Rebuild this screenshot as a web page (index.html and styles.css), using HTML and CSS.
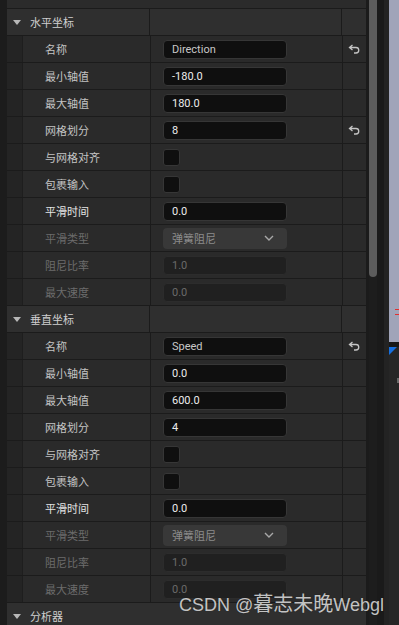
FILE: index.html
```html
<!DOCTYPE html>
<html lang="zh-CN">
  <head>
    <meta charset="UTF-8" />
    <meta name="viewport" content="width=device-width, initial-scale=1.0" />
    <title>混合空间 - 轴设置</title>
    <link rel="stylesheet" href="styles.css">
  </head>
  <body>
    <div class="screen">
      <div class="edge"></div>

      <div class="panel">
        <div class="row row-top"></div>

        <!-- 水平坐标 -->
        <div class="row head">
          <div class="head-name"><span class="caret"></span>水平坐标</div>
          <div class="value"></div>
          <div class="reset"></div>
        </div>
        <div class="row">
          <div class="indent"></div>
          <div class="name">名称</div>
          <div class="value"><div class="field field-dim">Direction</div></div>
          <div class="reset">
            <svg width="12" height="10" viewBox="0 0 12 10"><path d="M4.5 1 L1.5 3.5 L4.5 6 M1.5 3.5 H8 A2.7 2.7 0 0 1 8 9 H6" fill="none" stroke="#c4c4c4" stroke-width="1.3"/></svg>
          </div>
        </div>
        <div class="row">
          <div class="indent"></div>
          <div class="name">最小轴值</div>
          <div class="value"><div class="field">-180.0</div></div>
          <div class="reset"></div>
        </div>
        <div class="row">
          <div class="indent"></div>
          <div class="name">最大轴值</div>
          <div class="value"><div class="field">180.0</div></div>
          <div class="reset"></div>
        </div>
        <div class="row">
          <div class="indent"></div>
          <div class="name">网格划分</div>
          <div class="value"><div class="field">8</div></div>
          <div class="reset">
            <svg width="12" height="10" viewBox="0 0 12 10"><path d="M4.5 1 L1.5 3.5 L4.5 6 M1.5 3.5 H8 A2.7 2.7 0 0 1 8 9 H6" fill="none" stroke="#c4c4c4" stroke-width="1.3"/></svg>
          </div>
        </div>
        <div class="row">
          <div class="indent"></div>
          <div class="name">与网格对齐</div>
          <div class="value"><div class="check"></div></div>
          <div class="reset"></div>
        </div>
        <div class="row">
          <div class="indent"></div>
          <div class="name">包裹输入</div>
          <div class="value"><div class="check"></div></div>
          <div class="reset"></div>
        </div>
        <div class="row">
          <div class="indent"></div>
          <div class="name name-hi">平滑时间</div>
          <div class="value"><div class="field">0.0</div></div>
          <div class="reset"></div>
        </div>
        <div class="row">
          <div class="indent"></div>
          <div class="name name-off">平滑类型</div>
          <div class="value">
            <div class="combo">弹簧阻尼
              <svg width="10" height="6" viewBox="0 0 10 6"><path d="M1 1 L5 5 L9 1" fill="none" stroke="#a8a8a8" stroke-width="1.4"/></svg>
            </div>
          </div>
          <div class="reset"></div>
        </div>
        <div class="row">
          <div class="indent"></div>
          <div class="name name-off">阻尼比率</div>
          <div class="value"><div class="field field-off">1.0</div></div>
          <div class="reset"></div>
        </div>
        <div class="row">
          <div class="indent"></div>
          <div class="name name-off">最大速度</div>
          <div class="value"><div class="field field-off">0.0</div></div>
          <div class="reset"></div>
        </div>

        <!-- 垂直坐标 -->
        <div class="row head">
          <div class="head-name"><span class="caret"></span>垂直坐标</div>
          <div class="value"></div>
          <div class="reset"></div>
        </div>
        <div class="row">
          <div class="indent"></div>
          <div class="name">名称</div>
          <div class="value"><div class="field field-dim">Speed</div></div>
          <div class="reset">
            <svg width="12" height="10" viewBox="0 0 12 10"><path d="M4.5 1 L1.5 3.5 L4.5 6 M1.5 3.5 H8 A2.7 2.7 0 0 1 8 9 H6" fill="none" stroke="#c4c4c4" stroke-width="1.3"/></svg>
          </div>
        </div>
        <div class="row">
          <div class="indent"></div>
          <div class="name">最小轴值</div>
          <div class="value"><div class="field">0.0</div></div>
          <div class="reset"></div>
        </div>
        <div class="row">
          <div class="indent"></div>
          <div class="name">最大轴值</div>
          <div class="value"><div class="field">600.0</div></div>
          <div class="reset"></div>
        </div>
        <div class="row">
          <div class="indent"></div>
          <div class="name">网格划分</div>
          <div class="value"><div class="field">4</div></div>
          <div class="reset"></div>
        </div>
        <div class="row">
          <div class="indent"></div>
          <div class="name">与网格对齐</div>
          <div class="value"><div class="check"></div></div>
          <div class="reset"></div>
        </div>
        <div class="row">
          <div class="indent"></div>
          <div class="name">包裹输入</div>
          <div class="value"><div class="check"></div></div>
          <div class="reset"></div>
        </div>
        <div class="row">
          <div class="indent"></div>
          <div class="name name-hi">平滑时间</div>
          <div class="value"><div class="field">0.0</div></div>
          <div class="reset"></div>
        </div>
        <div class="row">
          <div class="indent"></div>
          <div class="name name-off">平滑类型</div>
          <div class="value">
            <div class="combo">弹簧阻尼
              <svg width="10" height="6" viewBox="0 0 10 6"><path d="M1 1 L5 5 L9 1" fill="none" stroke="#a8a8a8" stroke-width="1.4"/></svg>
            </div>
          </div>
          <div class="reset"></div>
        </div>
        <div class="row">
          <div class="indent"></div>
          <div class="name name-off">阻尼比率</div>
          <div class="value"><div class="field field-off">1.0</div></div>
          <div class="reset"></div>
        </div>
        <div class="row">
          <div class="indent"></div>
          <div class="name name-off">最大速度</div>
          <div class="value"><div class="field field-off">0.0</div></div>
          <div class="reset"></div>
        </div>

        <!-- 分析器 -->
        <div class="row category">
          <div class="head-name"><span class="caret"></span>分析器</div>
        </div>
      </div>

      <div class="gap-a"></div>
      <div class="scroll"><div class="thumb"></div></div>
      <div class="gap-b"></div>
      <div class="gap-c"></div>
      <div class="viewport">
        <div class="view-top"><span class="marker"></span></div>
        <div class="corner"></div>
        <span class="view-dot"></span>
      </div>
    </div>

    <div class="watermark">CSDN @<span class="wm-cjk">暮志未晚</span>Webgl</div>
  </body>
</html>
```

FILE: styles.css
```css
body {
  margin: 0;
  width: 399px;
  height: 625px;
  overflow: hidden;
  background: #1c1c1c;
  font-family: "Noto Sans CJK SC", "Noto Sans", sans-serif;
  font-size: 11px;
  position: relative;
}
.screen {
  display: flex;
  height: 625px;
}
.edge {
  width: 7px;
  background: #1c1c1c;
}
.panel {
  width: 359px;
  background: #282828;
  display: flex;
  flex-direction: column;
  overflow: hidden;
}
.row {
  display: flex;
  flex: none;
  height: 26px;
  border-bottom: 1px solid #1b1b1b;
  background: #2a2a2a;
  color: #c4c4c4;
}
.row-top {
  height: 8px;
  background: #2b2b2b;
}
.head,
.category {
  background: #2f2f2f;
  color: #cfcfcf;
}
.head-name {
  width: 143px;
  border-right: 1px solid #1b1b1b;
  display: flex;
  align-items: center;
  padding-left: 6px;
  box-sizing: border-box;
  line-height: 1;
}
.category .head-name {
  border-right: none;
}
.caret {
  width: 0;
  height: 0;
  border-left: 4px solid transparent;
  border-right: 4px solid transparent;
  border-top: 5px solid #b8b8b8;
  margin-right: 9px;
}
.indent {
  width: 15px;
  background: #242424;
  border-right: 1px solid #1e1e1e;
}
.name {
  width: 127px;
  border-right: 1px solid #1b1b1b;
  display: flex;
  align-items: center;
  padding-left: 22px;
  box-sizing: content-box;
  width: 105px;
}
.name-hi {
  color: #e4e4e4;
}
.name-off {
  color: #6c6c6c;
}
.value {
  width: 192px;
  border-right: 1px solid #1b1b1b;
  display: flex;
  align-items: center;
  padding-left: 12px;
  box-sizing: border-box;
}
.reset {
  width: 22px;
  display: flex;
  align-items: center;
  justify-content: center;
}
.field {
  width: 124px;
  height: 19px;
  box-sizing: border-box;
  background: #0f0f0f;
  border: 1px solid #363636;
  border-radius: 4px;
  font-family: Roboto, "Noto Sans CJK SC", sans-serif;
  font-size: 11px;
  color: #ececec;
  padding-left: 8px;
  display: flex;
  align-items: center;
}
.field-dim {
  color: #c8c8c8;
}
.field-off {
  background: #202020;
  border-color: #2c2c2c;
  color: #6a6a6a;
}
.check {
  width: 17px;
  height: 17px;
  box-sizing: border-box;
  background: #0f0f0f;
  border: 1px solid #363636;
  border-radius: 3px;
}
.combo {
  width: 124px;
  height: 21px;
  box-sizing: border-box;
  background: #383838;
  border-radius: 4px;
  color: #8c8c8c;
  padding: 0 13px 0 9px;
  display: flex;
  align-items: center;
  justify-content: space-between;
}
.gap-a {
  width: 3px;
  background: #1b1b1b;
}
.scroll {
  width: 8px;
  background: #1d1d1d;
}
.thumb {
  height: 277px;
  background: #5c5c5c;
  border-radius: 0 0 4px 4px;
}
.gap-b {
  width: 7px;
  background: #1a1a1a;
}
.gap-c {
  width: 5px;
  background: #232323;
}
.viewport {
  width: 10px;
  background: #262626;
  position: relative;
}
.view-top {
  height: 342px;
  background: #a0a4b9;
  position: relative;
  border-bottom: 5px solid #181818;
}
.marker {
  position: absolute;
  left: 6px;
  top: 309px;
  width: 4px;
  height: 4px;
  border-top: 1px solid #e03030;
  border-bottom: 1px solid #e03030;
}
.corner {
  width: 0;
  height: 0;
  border-top: 8px solid #1670e0;
  border-right: 8px solid transparent;
}
.view-dot {
  position: absolute;
  left: 8px;
  top: 378px;
  width: 2px;
  height: 5px;
  background: #6a6a6a;
}
.watermark {
  position: absolute;
  left: 179px;
  top: 592px;
  font-family: "Liberation Sans", "Noto Sans CJK SC", sans-serif;
  font-size: 18px;
  color: rgba(235, 235, 235, 0.82);
  white-space: nowrap;
  line-height: 22px;
  text-shadow: 0 0 1px rgba(0, 0, 0, 0.4);
}
.wm-cjk {
  font-family: "Noto Sans CJK SC", sans-serif;
  font-size: 20px;
}
```
